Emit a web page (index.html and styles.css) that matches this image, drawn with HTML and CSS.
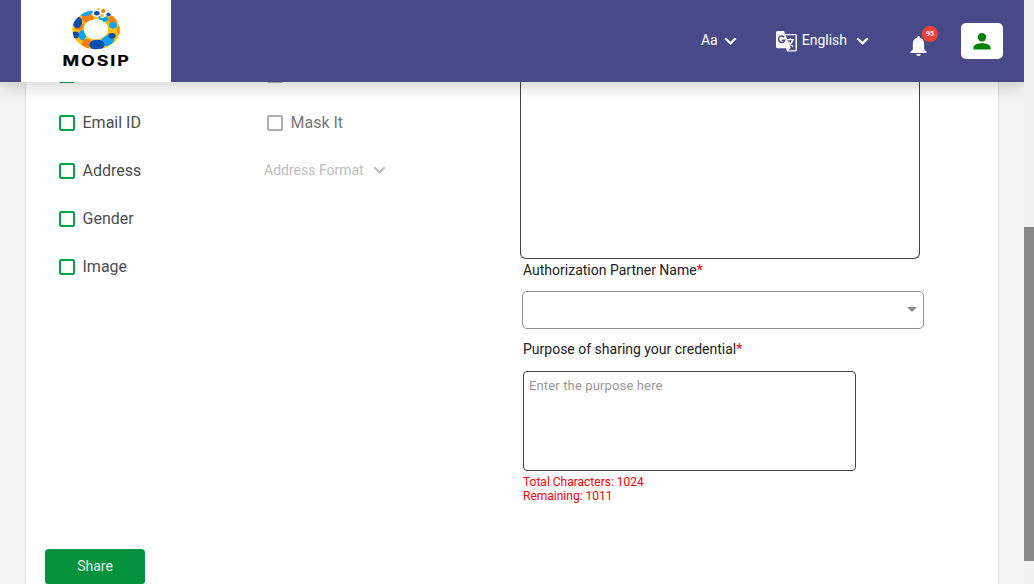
FILE: index.html
```html
<!DOCTYPE html>
<html lang="en">
<head>
<meta charset="utf-8">
<title>MOSIP Resident Portal</title>
<link rel="stylesheet" href="styles.css">
</head>
<body>
<div class="page">
  <header class="header">
    <div class="logo">
      <svg width="150" height="82" viewBox="21 0 150 82">
        <defs>
          <clipPath id="ring"><path clip-rule="evenodd" d="M72.3 30a23.7 19.3 0 0 1 20.2-19.5V16l10 2 8-3.3A23.7 19.3 0 1 1 72.3 30zM83.7 29.2a12.2 10.2 0 1 0 24.4 0a12.2 10.2 0 1 0-24.4 0z"/></clipPath>
        </defs>
        <g clip-path="url(#ring)">
          <rect x="70" y="8" width="52" height="43" fill="#ffc20e"/>
          <ellipse cx="88" cy="18" rx="6" ry="4.5" fill="#ff7f0e"/>
          <ellipse cx="87" cy="12.8" rx="6.3" ry="3" transform="rotate(-20 87 12.8)" fill="#0da2ff"/>
          <ellipse cx="79" cy="26" rx="5" ry="4" fill="#ff7f0e"/>
          <ellipse cx="77.5" cy="22.5" rx="4.6" ry="5.7" transform="rotate(15 77.5 22.5)" fill="#0550b5"/>
          <ellipse cx="82.5" cy="35" rx="3.8" ry="5.3" fill="#0da2ff"/>
          <ellipse cx="75.5" cy="35" rx="3.6" ry="3.4" fill="#0550b5"/>
          <ellipse cx="86.5" cy="43.5" rx="4.8" ry="4.5" fill="#ff7f0e"/>
          <ellipse cx="107.5" cy="40.5" rx="6.8" ry="5" transform="rotate(-25 107.5 40.5)" fill="#0da2ff"/>
          <ellipse cx="97" cy="44.8" rx="7.7" ry="5.2" fill="#0550b5"/>
          <ellipse cx="112" cy="35.7" rx="3.8" ry="2.8" fill="#0550b5"/>
          <ellipse cx="119.5" cy="30" rx="2.5" ry="4" fill="#ff7f0e"/>
          <ellipse cx="113" cy="19.5" rx="4.5" ry="4" fill="#ff7f0e"/>
          <ellipse cx="113" cy="25.3" rx="4" ry="3.2" fill="#0da2ff"/>
          <ellipse cx="103.7" cy="18.8" rx="4.8" ry="3.3" fill="#0da2ff"/>
        </g>
        <ellipse cx="96.8" cy="13.3" rx="2.8" ry="2.2" fill="#0550b5"/>
        <ellipse cx="98.6" cy="9" rx="1.4" ry="1.1" fill="#ffc20e"/>
        <ellipse cx="103.3" cy="11" rx="2.1" ry="1.9" fill="#ff7f0e"/>
        <ellipse cx="108.5" cy="14.5" rx="2.2" ry="1.8" fill="#0550b5"/>
        <ellipse cx="102" cy="15.5" rx="2" ry="1.7" fill="#ffc20e"/>
        <ellipse cx="99.5" cy="17" rx="1.2" ry="1" fill="#0da2ff"/>
        <text class="wordmark" x="62.6" y="66.3" textLength="68" lengthAdjust="spacingAndGlyphs">MOSIP</text>
      </svg>
    </div>
    <nav class="tools">
      <div class="font-menu"><span>Aa</span>
        <svg class="chev" width="13" height="8" viewBox="0 0 13 8"><path d="M1.2 1.2 6.5 6.4 11.8 1.2"/></svg>
      </div>
      <div class="lang-menu">
        <svg class="translate" width="21" height="21" viewBox="0 0 21 21">
          <path d="M1.5 0H8l1 3h10.3Q21 3 21 4.7v14.1q0 1.7-1.7 1.7H11l-1-3.2H1.7Q0 17.300 0 15.600V1.500Q0 0 1.500 0z" fill="#fff"/>
          <path d="M9.600 4.200h9.900v15.100h-7.200l2.400-2.300z" fill="#474989"/>
          <path d="M8.300 6.300A3.200 3.200 0 1 0 8.800 9.200H5.800" fill="none" stroke="#474989" stroke-width="1.500"/>
          <path d="M11 8.700h7M14.300 7v1.700M16.700 9q-1 4-4.700 6.200M12.600 10.600q1.600 3.400 4.600 5" fill="none" stroke="#fff" stroke-width="1.300"/>
        </svg>
        <span>English</span>
        <svg class="chev" width="13" height="8" viewBox="0 0 13 8"><path d="M1.2 1.2 6.5 6.4 11.8 1.2"/></svg>
      </div>
      <div class="bell">
        <svg width="17" height="20" viewBox="0 0 18 20" preserveAspectRatio="none"><path d="M9 0c-1 0-1.500.700-1.500 1.700C4.500 2.400 3 4.900 3 8v5.500L.500 16v1h17v-1L15 13.500V8c0-3.100-1.500-5.600-4.500-6.300C10.500.700 10 0 9 0zM6.500 18h5q-.3 2-2.500 2t-2.500-2z" fill="#fff"/></svg>
        <span class="badge">95</span>
      </div>
      <div class="profile">
        <svg width="18" height="17" viewBox="0 0 18 17" fill="#008000"><circle cx="9" cy="4.300" r="4.200"/><path d="M.5 16.500v-2.200C.5 11.500 5.800 10.200 9 10.200s8.500 1.300 8.500 4.100v2.200z"/></svg>
      </div>
    </nav>
  </header>
  <main class="content">
    <section class="card">
      <div class="attributes">
        <div class="list">
          <div class="row"><i class="box"></i></div>
          <div class="row"><i class="box"></i>Email ID</div>
          <div class="row"><i class="box"></i>Address</div>
          <div class="row"><i class="box"></i>Gender</div>
          <div class="row"><i class="box"></i>Image</div>
        </div>
        <div class="share">Share</div>
      </div>
      <div class="options">
        <div class="row muted"><i class="box"></i></div>
        <div class="row muted"><i class="box"></i>Mask It</div>
        <div class="row format">Address Format
          <svg class="chev thin" width="13" height="8" viewBox="0 0 13 8"><path d="M1.200 1.200 6.500 6.400 11.800 1.200"/></svg>
        </div>
      </div>
      <div class="form">
        <div class="preview"></div>
        <div class="label partner">Authorization Partner Name<b>*</b></div>
        <div class="select"><i class="arrow"></i></div>
        <div class="label purpose">Purpose of sharing your credential<b>*</b></div>
        <div class="textarea">Enter the purpose here</div>
        <div class="count">Total Characters: 1024<br>Remaining: 1011</div>
      </div>
    </section>
  </main>
</div>
<div class="scrollbar"><div class="thumb"></div></div>
</body>
</html>
```
FILE: styles.css
```css
* { box-sizing: border-box; }
body { margin: 0; height: 584px; display: flex; overflow: hidden; background: #f3f3f3; font-family: Roboto, sans-serif; }
svg { display: block; flex: none; }
.page { width: 1024px; height: 584px; display: flex; flex-direction: column; overflow: hidden; }
.header { position: relative; z-index: 1; height: 82px; flex: none; display: flex; justify-content: space-between; padding: 0 21px; background: #474989; box-shadow: 0 4px 16px rgba(0,0,0,.18); }
.logo { width: 150px; height: 82px; background: #fff; }
.wordmark { font: 700 14px Inter, sans-serif; letter-spacing: 1.500px; fill: #000; stroke: #000; stroke-width: .2px; }
.tools { display: flex; height: 82px; align-items: center; color: #fff; font-size: 14px; }
.tools span { padding-bottom: 2px; }
.chev { fill: none; stroke: #fff; stroke-width: 2.200; }
.font-menu { display: flex; align-items: center; gap: 6px; margin-right: 39px; }
.lang-menu { display: flex; align-items: center; gap: 5px; margin-right: 41px; }
.lang-menu .chev { margin-left: 4px; }
.font-menu .chev, .lang-menu .chev { margin-bottom: 1px; }
.bell { position: relative; padding-top: 10px; margin-right: 34px; }
.tools .badge { position: absolute; left: 12px; top: 0; width: 16px; height: 16px; padding: 0; border-radius: 50%; background: #f44336; font: 700 7px/16px Roboto, sans-serif; text-align: center; }
.profile { width: 42px; height: 36px; padding-top: 1px; display: flex; align-items: center; justify-content: center; background: #fff; border-radius: 5px; }
.content { flex: 1; min-height: 0; padding: 0 26px; }
.card { height: 502px; display: flex; background: #fff; overflow: hidden; box-shadow: 0 0 2px rgba(0,0,0,.2); }
.attributes { width: 238px; height: 502px; display: flex; flex-direction: column; justify-content: space-between; padding-left: 19px; }
.list { margin-top: -31px; padding-left: 14px; }
.row { height: 48px; padding-bottom: 2px; display: flex; align-items: center; gap: 7.500px; font-size: 16px; color: #4d4d4d; }
.box { flex: none; width: 16px; height: 16px; margin-top: 2px; border: 2px solid #05a04a; border-radius: 2px; }
.share { width: 100px; height: 35px; border-radius: 4px 4px 3px 3px; background: #03933f; color: #e6f4eb; font-size: 14px; line-height: 35px; text-align: center; }
.options { width: 256px; margin-top: -31px; }
.muted { padding-left: 3px; color: #767676; }
.muted .box { border-color: #adadad; }
.format { font-size: 14px; gap: 9px; color: #bdbdbd; }
.thin { stroke: #bdbdbd; stroke-width: 2; }
.form { width: 404px; font-size: 14px; }
.preview { width: 400px; height: 177px; border: 1px solid #444; border-top: 0; border-radius: 0 0 6px 6px; }
.label { padding-left: 3px; line-height: 16px; color: #212121; }
.label b { font-weight: 400; color: red; }
.partner { margin-top: 3px; }
.select { width: 402px; height: 38px; margin: 13px 0 12px 2px; padding-right: 6px; display: flex; align-items: center; justify-content: flex-end; border: 1px solid #919191; border-radius: 5px; }
.arrow { border: 5px solid transparent; border-top-color: #8c8c8c; border-bottom: 0; margin-top: -1px; }
.textarea { width: 333px; height: 100px; margin: 14px 0 4px 3px; padding: 6px 5px; border: 1px solid #444; border-radius: 4px; color: #999; font-size: 13px; line-height: 16px; letter-spacing: .14px; }
.count { padding-left: 3px; color: red; font-size: 12px; line-height: 14px; }
.scrollbar { width: 10px; height: 584px; padding-top: 227px; background: #f1f1f1; }
.thumb { height: 334px; background: #888; }
```
